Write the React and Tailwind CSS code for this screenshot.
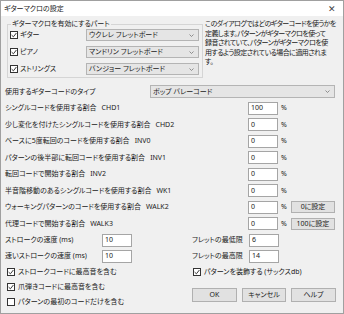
import React from "react";

const font = "[font-family:'Noto_Sans','Noto_Sans_CJK_JP',sans-serif] [font-feature-settings:'palt']";

const Check = ({ on }) => (
    <span className="w-[8px] h-[8px] border border-[#333] bg-white flex items-center justify-center shrink-0">
        {on && (
            <svg width="6" height="6" viewBox="0 0 6 6">
                <path d="M0.6 3.1 L2.4 4.8 L5.4 1" fill="none" stroke="#222" strokeWidth="0.9" />
            </svg>
        )}
    </span>
);

const Chevron = () => (
    <svg width="5" height="3" viewBox="0 0 5 3" className="shrink-0">
        <path d="M0.5 0.5 L2.5 2.5 L4.5 0.5" fill="none" stroke="#777" strokeWidth="0.8" />
    </svg>
);

const Select = ({ value, className }) => (
    <div className={`bg-[#e5e5e5] border border-[#b4b4b4] flex items-center justify-between pl-[2px] pr-[4px] ${className}`}>
        <span>{value}</span>
        <Chevron />
    </div>
);

const Input = ({ value }) => (
    <div className="w-[30px] h-[13px] bg-white border border-[#a5a5a5] flex items-center pl-[2px]">{value}</div>
);

const Btn = ({ label, className }) => (
    <div className={`bg-[#e1e1e1] border border-[#b0b0b0] flex items-center justify-center ${className}`}>{label}</div>
);

const rows = [
    ["シングルコードを使用する割合", "CHD1", "100"],
    ["少し変化を付けたシングルコードを使用する割合", "CHD2", "0"],
    ["ベースに5度転回のコードを使用する割合", "INV0", "0"],
    ["パターンの後半部に転回コードを使用する割合", "INV1", "0"],
    ["転回コードで開始する割合", "INV2", "0"],
    ["半音階移動のあるシングルコードを使用する割合", "WK1", "0"],
    ["ウォーキングパターンのコードを使用する割合", "WALK2", "0", "0に設定"],
    ["代理コードで開始する割合", "WALK3", "0", "100に設定"],
];

const parts = [
    ["ギター", "ウクレレ フレットボード"],
    ["ピアノ", "マンドリン フレットボード"],
    ["ストリングス", "バンジョー フレットボード"],
];

export default function App() {
    return (
        <div className={`w-[344px] h-[314px] bg-[#f0f0f0] border border-[#a0a0a0] text-[7px] leading-[10px] text-[#1a1a1a] overflow-hidden ${font}`}>
            {/* title bar */}
            <div className="h-[15px] bg-white flex items-center justify-between pl-[3px] pr-[7px]">
                <span>ギターマクロの設定</span>
                <span className="text-[9px] text-[#444]">✕</span>
            </div>

            <div className="px-[4px]">
                {/* parts group + description */}
                <div className="flex mt-[3px]">
                    <fieldset className="ml-[2px] w-[196px] h-[59px] border border-[#d5d5d5] pl-[2px] pr-[3px] pb-[2px]">
                        <legend className="ml-[1px] px-[1px]">ギターマクロを有効にするパート</legend>
                        <div className="flex flex-col gap-[5px]">
                            {parts.map(([name, board]) => (
                                <div key={name} className="flex items-center h-[12px]">
                                    <Check on />
                                    <span className="ml-[2px] w-[66px]">{name}</span>
                                    <Select value={board} className="flex-1 h-[12px]" />
                                </div>
                            ))}
                        </div>
                    </fieldset>
                    <p className="ml-[2px] w-[134px] leading-[9.5px] tracking-[-0.55px] whitespace-nowrap">
                        このダイアログではどのギターコードを使うかを<br />
                        定義します。パターンがギターマクロを使って<br />
                        録音されていて、パターンがギターマクロを使<br />
                        用するよう設定されている場合に適用されま<br />
                        す。
                    </p>
                </div>

                {/* chord type */}
                <div className="flex items-center justify-between mt-[7px] h-[13px]">
                    <span>使用するギターコードのタイプ</span>
                    <Select value="ポップ バレーコード" className="w-[185px] h-[13px] mr-[4px]" />
                </div>

                {/* percentages */}
                <div className="mt-[2px] flex flex-col">
                    {rows.map(([label, code, val, btn]) => (
                        <div key={code} className="flex items-center h-[16.5px]">
                            <span className="w-[243px] whitespace-nowrap">
                                {label}
                                <span className="ml-[5px]">{code}</span>
                            </span>
                            <Input value={val} />
                            <span className="ml-[3px] w-[10px]">%</span>
                            {btn && <Btn label={btn} className="w-[44px] h-[12px]" />}
                        </div>
                    ))}
                </div>

                {/* bottom area */}
                <div className="grid grid-cols-[187px_1fr]">
                    <div className="flex flex-col">
                        <div className="flex items-center h-[16px]">
                            <span className="w-[97px]">ストロークの速度 (ms)</span>
                            <Input value="10" />
                        </div>
                        <div className="flex items-center h-[16px]">
                            <span className="w-[97px]">速いストロークの速度 (ms)</span>
                            <Input value="10" />
                        </div>
                        {[
                            ["ストロークコードに最高音を含む", true],
                            ["爪弾きコードに最高音を含む", true],
                            ["パターンの最初のコードだけを含む", false],
                        ].map(([t, on]) => (
                            <div key={t} className="flex items-center h-[15px] pl-[2px]">
                                <Check on={on} />
                                <span className="ml-[3px]">{t}</span>
                            </div>
                        ))}
                    </div>
                    <div className="flex flex-col">
                        <div className="flex items-center h-[16px]">
                            <span className="w-[57px]">フレットの最低限</span>
                            <Input value="6" />
                        </div>
                        <div className="flex items-center h-[16px]">
                            <span className="w-[57px]">フレットの最高限</span>
                            <Input value="14" />
                        </div>
                        <div className="flex items-center h-[15px] pl-[1px]">
                            <Check on />
                            <span className="ml-[3px]">パターンを装飾する (サックスdb)</span>
                        </div>
                        <div className="flex mt-[9px] gap-[5px]">
                            <Btn label="OK" className="w-[45px] h-[14px]" />
                            <Btn label="キャンセル" className="w-[44px] h-[14px]" />
                            <Btn label="ヘルプ" className="w-[45px] h-[14px]" />
                        </div>
                    </div>
                </div>
            </div>
        </div>
    );
}
